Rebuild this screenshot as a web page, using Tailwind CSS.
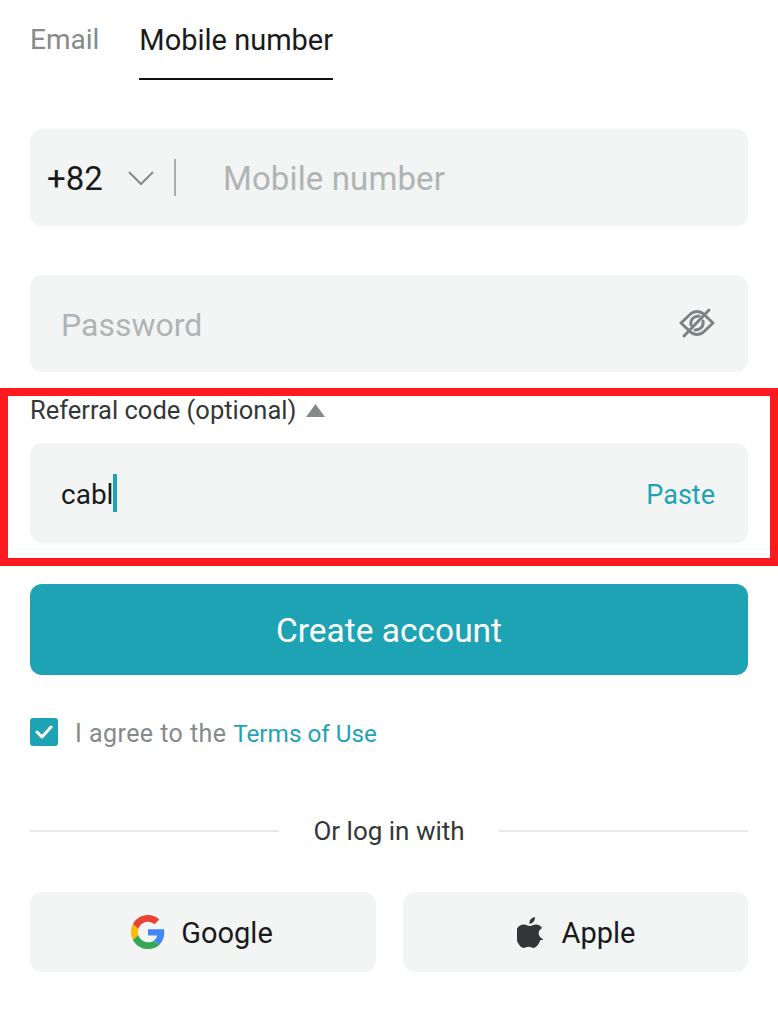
<!DOCTYPE html>
<html lang="en">
<head>
    <meta charset="UTF-8">
    <meta name="viewport" content="width=device-width, initial-scale=1.0">
    <title>Create account</title>
    <script src="https://cdn.jsdelivr.net/npm/@tailwindcss/browser@4"></script>
</head>
<body class="bg-white">
    <main class="w-[778px] h-[1024px] overflow-hidden font-['Roboto',sans-serif]">

        <!-- tabs -->
        <div class="flex gap-[40px] pl-[30px] h-[80px]">
            <span class="pt-[20px] leading-[40px] text-[28px] text-[#858a8a]">Email</span>
            <span class="pt-[20px] leading-[40px] text-[29px] text-[#1a1a1a] border-b-2 border-[#111]">Mobile number</span>
        </div>

        <div class="px-[30px] pt-[49px]">
            <!-- mobile -->
            <div class="h-[97px] rounded-[12px] bg-[#f3f5f5] flex items-center pl-[17px] text-[33px]">
                <span class="pt-[2px] text-[#1a1a1a] w-[81px]">+82</span>
                <svg class="w-[26px] h-[16px]" viewBox="0 0 26 16" fill="none" stroke="#858a8a" stroke-width="2"><path d="M1 2l12 12L25 2"/></svg>
                <span class="ml-[20px] w-[2px] h-[37px] bg-[#a9aeae]"></span>
                <span class="ml-[47px] pt-[2px] text-[#b0b4b4] tracking-[0.12px]">Mobile number</span>
            </div>

            <!-- password -->
            <div class="mt-[49px] h-[97px] rounded-[12px] bg-[#f3f5f5] flex items-center justify-between pl-[31px] pr-[33px] text-[32px]">
                <span class="pt-[2px] text-[#b0b4b4]">Password</span>
                <svg class="w-[36px] h-[32px] -mt-[1px]" viewBox="0 0 36 32" fill="none" stroke="#7d8282" stroke-width="3" stroke-linecap="round" stroke-linejoin="round">
                    <path d="M2 16L12 6.500Q18 2.500 24 6.500L34 16L24 25.500Q18 29.500 12 25.500Z"/>
                    <path d="M5 29L30 3"/>
                    <path d="M12 18C11 12 15 9 20 9"/>
                    <path d="M16 23C21 23 25 20 24 14"/>
                </svg>
            </div>
        </div>

        <!-- highlighted referral section -->
        <section class="mt-[16px] h-[178px] border-[8px] border-[#ff1a1f] px-[22px]">
            <div class="flex items-center h-[28px] pt-[1px] text-[25.500px] text-[#333737]">
                <span>Referral code (optional)</span>
                <svg class="ml-[10px] w-[19px] h-[13px]" viewBox="0 0 19 13" fill="#858a8a"><path d="M9.500 0L19 13H0Z"/></svg>
            </div>
            <div class="mt-[19px] h-[100px] rounded-[12px] bg-[#f3f5f5] flex items-center justify-between pl-[31px] pr-[33px]">
                <span class="flex items-center text-[28px] text-[#1a1a1a]"><span class="pt-[3px]">cabl</span><span class="w-[4px] h-[38px] -mt-[1px] bg-[#1ea3b5]"></span></span>
                <span class="pt-[5px] text-[27px] text-[#1ea3b5]">Paste</span>
            </div>
        </section>

        <div class="px-[30px]">
            <button class="mt-[18px] w-full h-[91px] pt-[4px] rounded-[12px] bg-[#1ea3b5] text-white text-[33.500px]">Create account</button>

            <!-- terms -->
            <div class="mt-[43px] flex items-center h-[28px]">
                <span class="w-[28px] h-[28px] rounded-[3px] bg-[#1ea3b5] flex items-center justify-center">
                    <svg class="w-[18px] h-[14px]" viewBox="0 0 18 14" fill="none" stroke="#fff" stroke-width="3" stroke-linecap="round" stroke-linejoin="round"><path d="M2 7l5 5 9-10"/></svg>
                </span>
                <span class="ml-[17px] pt-[3px] text-[25px] tracking-[0.45px] text-[#858a8a]">I agree to the <span class="text-[24.300px] tracking-normal text-[#1ea3b5]">Terms of Use</span></span>
            </div>

            <!-- divider -->
            <div class="mt-[70px] flex items-center h-[30px] text-[26px] text-[#333737]">
                <span class="w-[249px] h-[2px] bg-[#e8eaea]"></span>
                <span class="flex-1 text-center pt-[1px]">Or log in with</span>
                <span class="w-[249px] h-[2px] bg-[#e8eaea]"></span>
            </div>

            <!-- social -->
            <div class="mt-[46px] flex gap-[27px] text-[29px] text-[#1a1a1a]">
                <div class="w-[346px] h-[80px] rounded-[12px] bg-[#f3f5f5] flex items-center justify-center gap-[16px]">
                    <svg class="w-[34px] h-[34px] -ml-[4px]" viewBox="0 0 48 48">
                        <path fill="#ea4335" d="M24 9.500c3.500 0 6.700 1.300 9.100 3.500l6.800-6.800C35.800 2.400 30.200 0 24 0 14.600 0 6.500 5.400 2.600 13.200l7.900 6.200C12.400 13.700 17.700 9.500 24 9.500z"/>
                        <path fill="#4285f4" d="M47 24.500c0-1.600-.1-3.100-.4-4.500H24v9h12.900c-.6 3-2.200 5.500-4.700 7.200l7.700 6C44.400 37.900 47 31.800 47 24.500z"/>
                        <path fill="#fbbc05" d="M10.500 28.600c-.5-1.400-.8-3-.8-4.600s.3-3.200.8-4.600l-7.900-6.200C.9 16.500 0 20.100 0 24s.9 7.500 2.600 10.800z"/>
                        <path fill="#34a853" d="M24 48c6.500 0 11.900-2.100 15.900-5.800l-7.700-6c-2.200 1.400-4.900 2.300-8.200 2.300-6.300 0-11.600-4.200-13.500-9.900l-7.900 6.200C6.500 42.600 14.600 48 24 48z"/>
                    </svg>
                    <span class="pt-[3px] -mr-[2px]">Google</span>
                </div>
                <div class="w-[345px] h-[80px] rounded-[12px] bg-[#f3f5f5] flex items-center justify-center gap-[19px]">
                    <svg class="w-[26px] h-[32px] ml-[1px]" viewBox="0 0 26 32" fill="#333737">
                        <path d="M18 1c.2 2.200-.6 3.700-1.600 4.800-1 1.200-2.400 2-4 1.900-.2-1.900.7-3.600 1.600-4.600C15 2 16.600 1.200 18 1z"/>
                        <path d="M25 24c-.7 1.600-1 2.300-1.900 3.700-1.300 2-3 4.200-5.100 4.200-1.900 0-2.400-1.200-4.900-1.200s-3.100 1.200-5 1.200c-2.100 0-3.700-2-5-3.900C-.4 22.700-.8 16 1.500 12.500 3.100 10 5.700 8.600 8.200 8.600c2.500 0 4.100 1.400 6.200 1.400 2 0 3.200-1.400 6.100-1.400 2.200 0 4.500 1.200 6.100 3.300-5.400 3-4.500 10.600 3.400 12.100z" transform="translate(-1.500 0)"/>
                    </svg>
                    <span class="pt-[3px]">Apple</span>
                </div>
            </div>
        </div>
    </main>
</body>
</html>
